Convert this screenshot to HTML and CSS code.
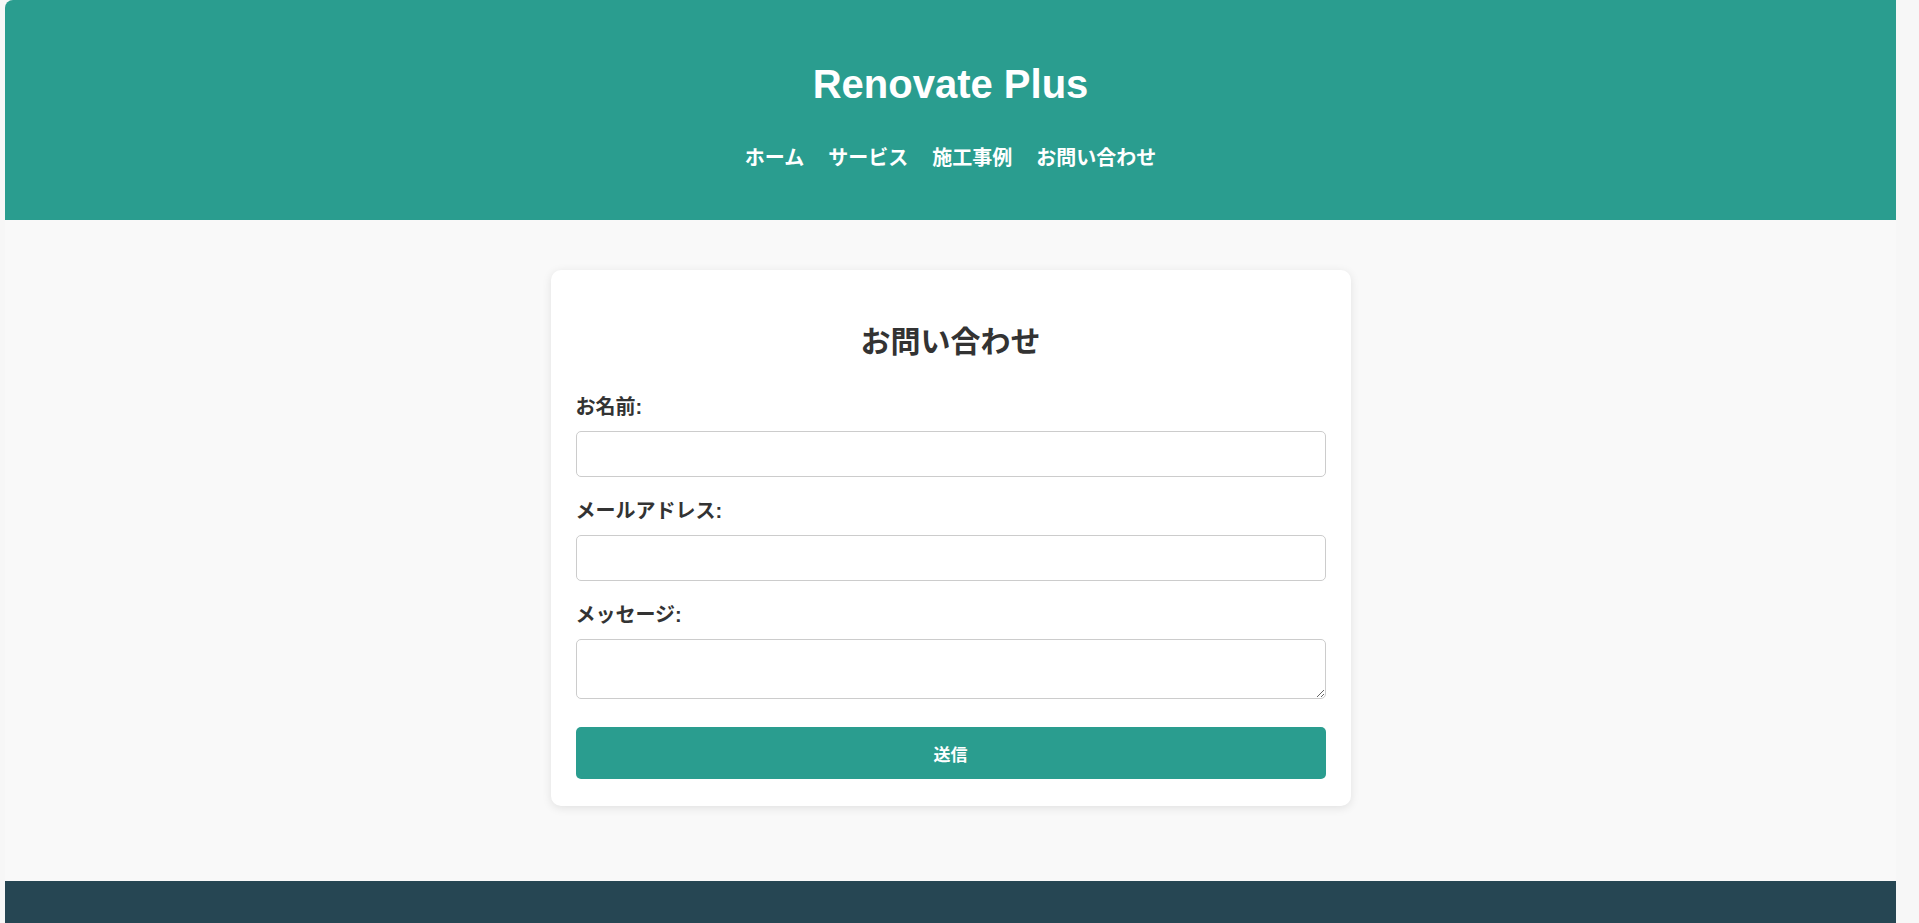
FILE: index.html
```html
<!DOCTYPE html>
<html lang="ja">
<head>
<meta charset="utf-8">
<title>お問い合わせ - Renovate Plus</title>
<link rel="stylesheet" href="styles.css">
</head>
<body>
<div class="page">
  <header class="site-header">
    <h1 class="site-title">Renovate Plus</h1>
    <nav class="site-nav">
      <a class="nav-link" href="#">ホーム</a>
      <a class="nav-link" href="#">サービス</a>
      <a class="nav-link" href="#">施工事例</a>
      <a class="nav-link" href="#">お問い合わせ</a>
    </nav>
  </header>
  <main class="page-main">
    <section class="contact-card">
      <h2 class="contact-title">お問い合わせ</h2>
      <form class="contact-form">
        <label class="field-label" for="name">お名前:</label>
        <input class="field-input" type="text" id="name">
        <label class="field-label" for="email">メールアドレス:</label>
        <input class="field-input" type="email" id="email">
        <label class="field-label" for="message">メッセージ:</label>
        <textarea class="field-textarea" id="message"></textarea>
        <button class="submit-btn" type="button">送信</button>
      </form>
    </section>
  </main>
  <footer class="site-footer"></footer>
</div>
</body>
</html>
```
FILE: styles.css
```css
* { box-sizing: border-box; }
body {
  margin: 0;
  padding: 0 23px 0 5px;
  background: #f7f7f7;
  color: #333;
  font-family: "Liberation Sans", "Noto Sans CJK JP", sans-serif;
}
.page {
  background: #f9f9f9;
  border-radius: 8px 0 0 8px;
  overflow: hidden;
}
.site-header {
  background: #2a9d8f;
  color: #fff;
  text-align: center;
  padding: 61px 0 48px;
}
.site-title {
  margin: 0 0 37px;
  font-size: 40px;
  line-height: 46px;
  font-weight: bold;
}
.site-nav {
  display: flex;
  justify-content: center;
}
.nav-link {
  color: #fff;
  text-decoration: none;
  font-weight: bold;
  font-size: 20px;
  line-height: 28px;
  margin: 0 12px;
}
.page-main {
  padding: 50px 20px 75px;
}
.contact-card {
  max-width: 800px;
  margin: 0 auto;
  background: #fff;
  border-radius: 10px;
  box-shadow: 0 2px 10px rgba(0,0,0,0.1);
  padding: 25px 25px 27px;
}
.contact-title {
  margin: 26px 0 31px;
  text-align: center;
  font-size: 30px;
  line-height: 42px;
  font-weight: bold;
}
.contact-form {
  display: flex;
  flex-direction: column;
}
.field-label {
  font-weight: bold;
  font-size: 20px;
  line-height: 27px;
  margin-bottom: 10px;
}
.field-input,
.field-textarea {
  display: block;
  width: 100%;
  border: 1px solid #ccc;
  border-radius: 5px;
  background: #fff;
  font-family: inherit;
  font-size: 16px;
}
.field-input {
  height: 46px;
  padding: 12px;
  margin-bottom: 21px;
}
.field-textarea {
  height: 60px;
  padding: 12px;
  margin-bottom: 28px;
  resize: vertical;
}
.submit-btn {
  height: 52px;
  border: none;
  border-radius: 5px;
  background: #2a9d8f;
  color: #fff;
  font-family: inherit;
  font-weight: bold;
  font-size: 17px;
  cursor: pointer;
}
.site-footer {
  background: #264653;
  height: 90px;
}
```
